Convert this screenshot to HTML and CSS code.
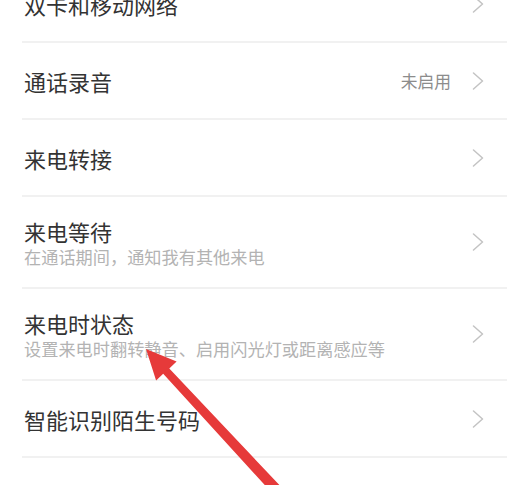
FILE: index.html
```html
<!DOCTYPE html>
<html lang="zh-CN">
<head>
<meta charset="utf-8">
<title>通话设置</title>
<link rel="stylesheet" href="styles.css">
</head>
<body>
<div class="page">
  <ul class="list">
    <li class="row"><div class="text"><div class="title">双卡和移动网络</div></div><svg class="chev" viewBox="0 0 12 18"><polyline points="1.5,1 10.5,9 1.5,17"/></svg></li>
    <li class="row"><div class="text"><div class="title">通话录音</div></div><span class="value">未启用</span><svg class="chev" viewBox="0 0 12 18"><polyline points="1.5,1 10.5,9 1.5,17"/></svg></li>
    <li class="row"><div class="text"><div class="title">来电转接</div></div><svg class="chev" viewBox="0 0 12 18"><polyline points="1.5,1 10.5,9 1.5,17"/></svg></li>
    <li class="row row-sub"><div class="text"><div class="title">来电等待</div><div class="sub">在通话期间，通知我有其他来电</div></div><svg class="chev" viewBox="0 0 12 18"><polyline points="1.5,1 10.5,9 1.5,17"/></svg></li>
    <li class="row row-sub"><div class="text"><div class="title">来电时状态</div><div class="sub">设置来电时翻转静音、启用闪光灯或距离感应等</div></div><svg class="chev" viewBox="0 0 12 18"><polyline points="1.5,1 10.5,9 1.5,17"/></svg></li>
    <li class="row"><div class="text"><div class="title">智能识别陌生号码</div></div><svg class="chev" viewBox="0 0 12 18"><polyline points="1.5,1 10.5,9 1.5,17"/></svg></li>
    <li class="row row-last"><div class="text"><div class="title faint">骚扰拦截</div></div><span class="value faint">已开启</span><svg class="chev" viewBox="0 0 12 18"><polyline points="1.5,1 10.5,9 1.5,17"/></svg></li>
  </ul>
  <svg class="arrow" viewBox="0 0 512 485" width="512" height="485">
    <polygon points="146,349 176.6,361.4 169.3,368.6 282.6,488.4 274.6,495.8 163.2,373.8 156.1,380.6"/>
  </svg>
</div>
</body>
</html>
```
FILE: styles.css
```css
html, body {
  margin: 0;
  padding: 0;
  background: #ffffff;
}
body {
  font-family: "Noto Sans CJK SC", "Noto Sans", sans-serif;
  overflow: hidden;
  width: 512px;
  height: 485px;
}
.page {
  position: relative;
  width: 512px;
  height: 485px;
  overflow: hidden;
}
.list {
  list-style: none;
  margin: -34px 5px 0 22px;
  padding: 0;
}
.row {
  display: flex;
  align-items: center;
  height: 75px;
  padding: 0 23px 0 2px;
  border-bottom: 2px solid #f1f1f1;
}
.row-sub {
  height: 90px;
}
.row-last {
  padding-bottom: 12px;
}
.text {
  flex: 1;
  display: flex;
  flex-direction: column;
}
.title {
  font-size: 22px;
  line-height: 28px;
  color: #333333;
}
.sub {
  font-size: 17.2px;
  line-height: 22px;
  margin-top: 1px;
  color: #b3b3b3;
}
.value {
  font-size: 16.8px;
  color: #8c8c8c;
  margin-right: 21px;
}
.faint {
  color: #d8d8d8;
}
.chev {
  width: 12px;
  height: 18px;
  fill: none;
  stroke: #c3c3c3;
  stroke-width: 1.5;
  stroke-linecap: round;
  stroke-linejoin: round;
}
.arrow {
  position: absolute;
  left: 0;
  top: 0;
  pointer-events: none;
}
.arrow polygon {
  fill: #e63a3a;
}
```
